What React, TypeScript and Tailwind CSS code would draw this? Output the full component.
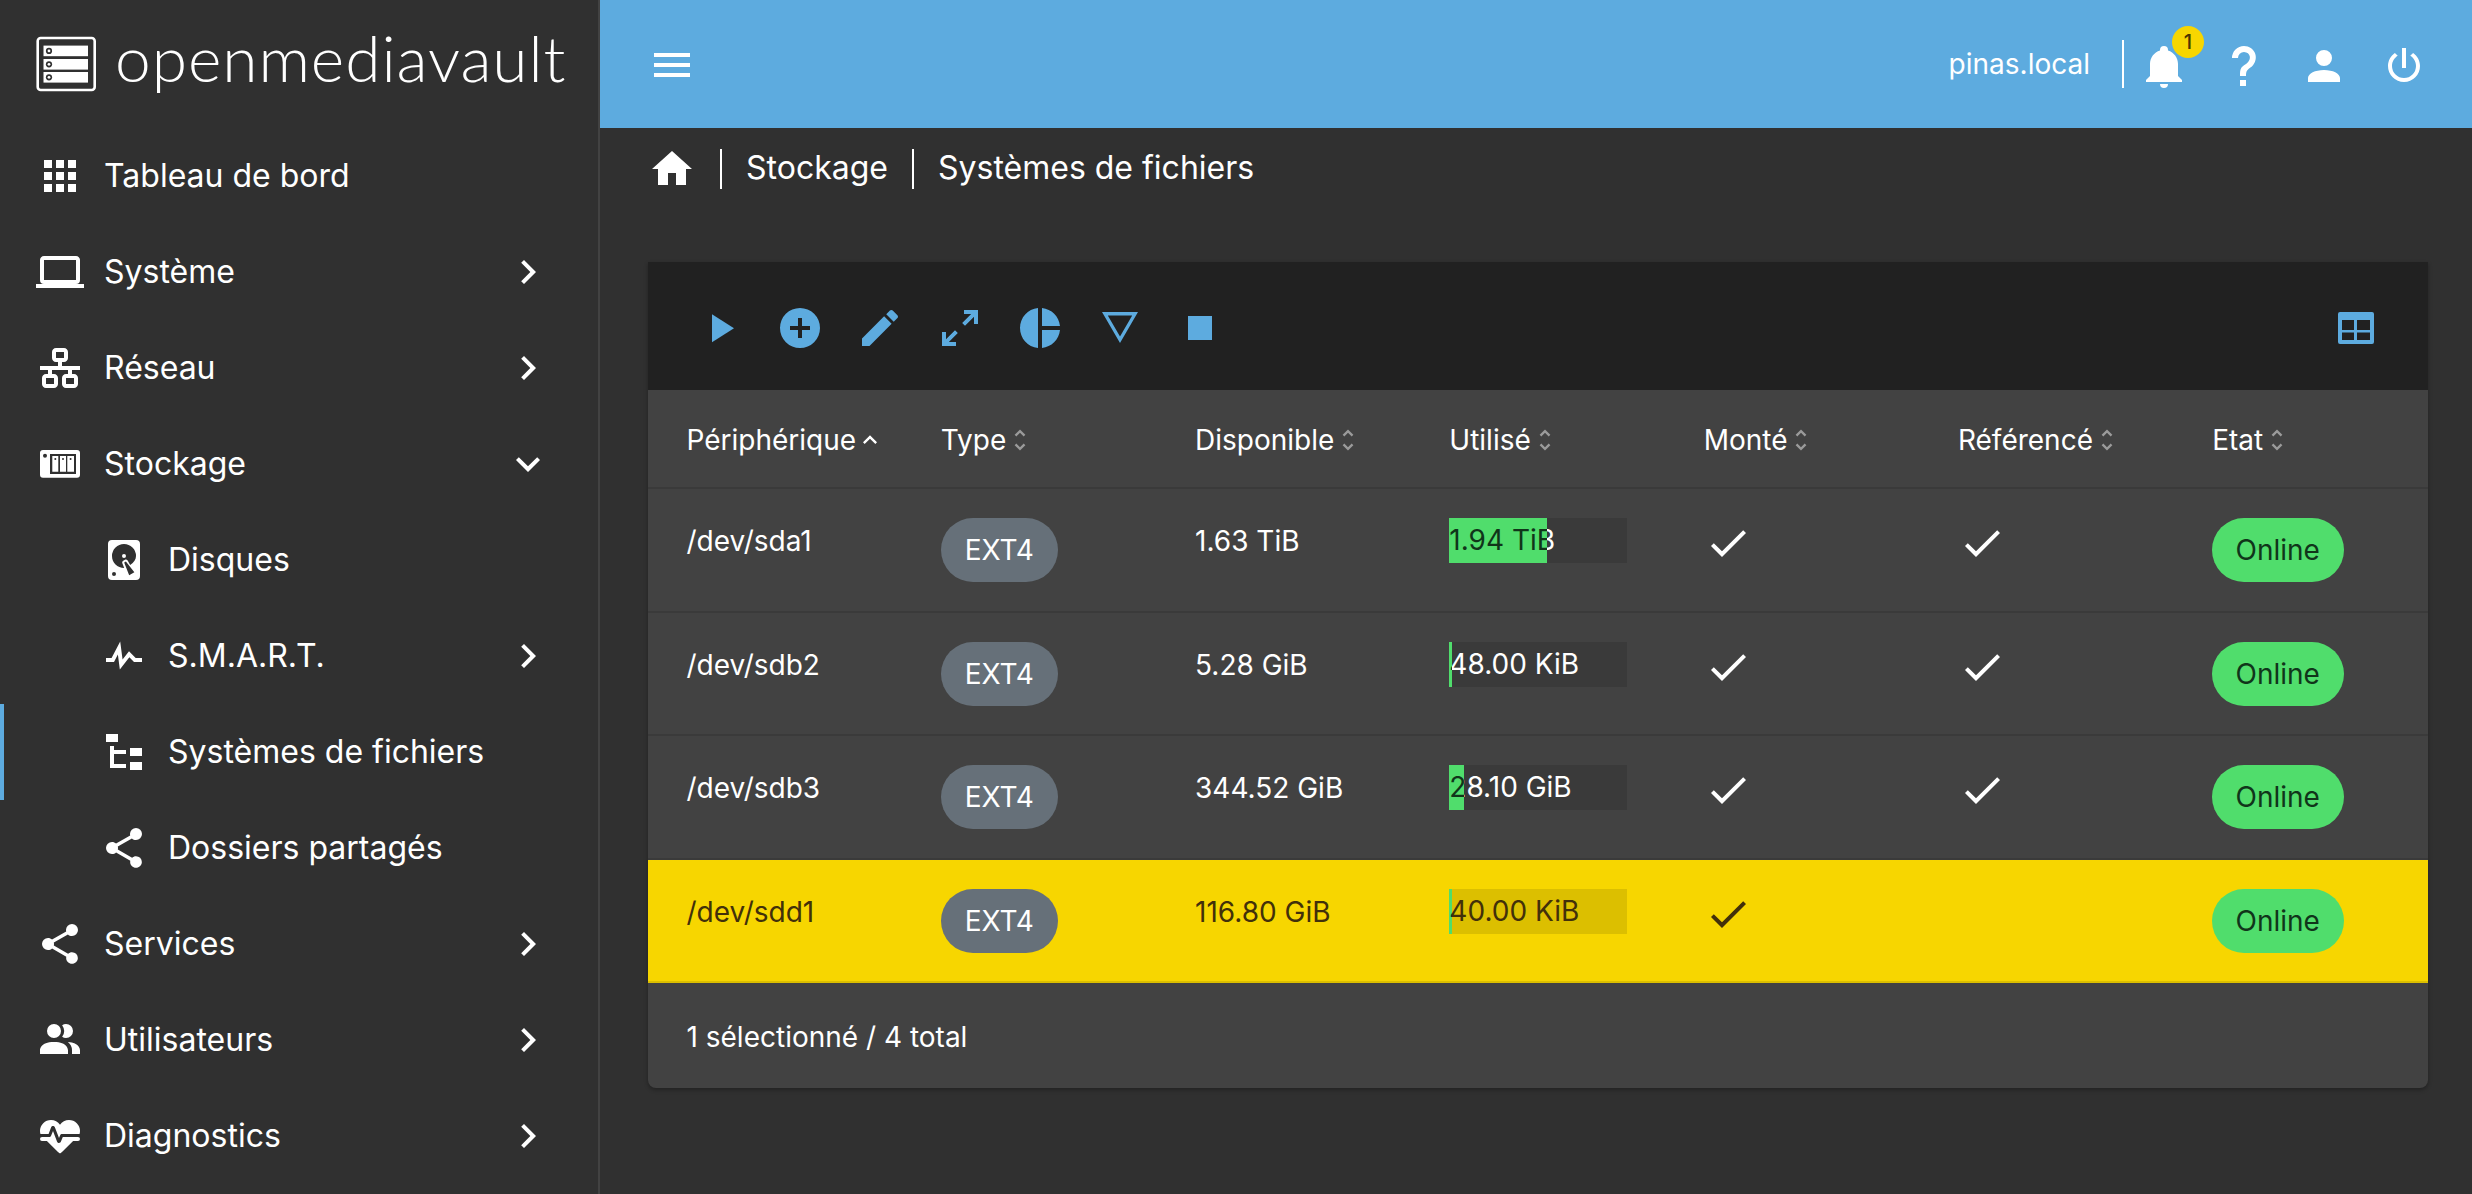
import React from "react";

const P = {
  apps: "M16,20H20V16H16M16,14H20V10H16M10,8H14V4H10M16,8H20V4H16M10,14H14V10H10M4,14H8V10H4M4,20H8V16H4M10,20H14V16H10M4,8H8V4H4V8Z",
  laptop: "M4,6H20V16H4M20,18A2,2 0 0,0 22,16V6C22,4.89 21.1,4 20,4H4C2.89,4 2,4.89 2,6V16A2,2 0 0,0 4,18H0V20H24V18H20Z",
  lan: "M10,2C8.89,2 8,2.89 8,4V7C8,8.11 8.89,9 10,9H11V11H2V13H6V15H5C3.89,15 3,15.89 3,17V20C3,21.11 3.89,22 5,22H9C10.11,22 11,21.11 11,20V17C11,15.89 10.11,15 9,15H8V13H16V15H15C13.89,15 13,15.89 13,17V20C13,21.11 13.89,22 15,22H19C20.11,22 21,21.11 21,20V17C21,15.89 20.11,15 19,15H18V13H22V11H13V9H14C15.11,9 16,8.11 16,7V4C16,2.89 15.11,2 14,2H10M10,4H14V7H10V4M5,17H9V20H5V17M15,17H19V20H15V17Z",
  storage: "M3.5,5H20.5A1.5,1.5 0 0,1 22,6.5V17.4A1.5,1.5 0 0,1 20.5,18.9H3.5A1.5,1.5 0 0,1 2,17.4V6.5A1.5,1.5 0 0,1 3.5,5ZM7,7V17H20V7ZM8.15,8V15.85H11.15V8ZM12,8V15.85H15V8ZM15.65,8V15.85H19V8ZM4.5,6.85A1,1 0 1,0 4.5,8.85A1,1 0 1,0 4.5,6.85ZM9.65,9A.5,.5 0 1,0 9.65,10A.5,.5 0 1,0 9.65,9ZM13.5,9A.5,.5 0 1,0 13.5,10A.5,.5 0 1,0 13.5,9ZM17.3,9A.5,.5 0 1,0 17.3,10A.5,.5 0 1,0 17.3,9Z",
  harddisk: "M6,2H18A2,2 0 0,1 20,4V20A2,2 0 0,1 18,22H6A2,2 0 0,1 4,20V4A2,2 0 0,1 6,2M12,4A6,6 0 0,0 6,10C6,13.31 8.69,16 12.1,16L11.22,13.77C10.95,13.29 11.13,12.68 11.61,12.4L12.47,11.9C12.95,11.63 13.56,11.8 13.84,12.28L15.08,14.47C17,13.27 18,11.67 18,10A6,6 0 0,0 12,4M12,9A1,1 0 0,1 13,10A1,1 0 0,1 12,11A1,1 0 0,1 11,10A1,1 0 0,1 12,9M7,18A1,1 0 0,0 6,19A1,1 0 0,0 7,20A1,1 0 0,0 8,19A1,1 0 0,0 7,18M12.09,13.27L14.58,19.58L17.17,18.08L12.95,12.77L12.09,13.27Z",
  pulse: "M3,13H5.79L10.1,4.79L11.28,13.75L14.5,9.66L17.83,13H21V15H17L14.67,12.67L9.92,18.73L8.94,11.31L7,15H3V13Z",
  tree: "M3,3H9V7H3V3M15,10H21V14H15V10M15,17H21V21H15V17M13,13H7V18H13V20H7L5,20V9H7V11H13V13Z",
  share: "M18,16.08C17.24,16.08 16.56,16.38 16.04,16.85L8.91,12.7C8.96,12.47 9,12.24 9,12C9,11.76 8.96,11.53 8.91,11.3L15.96,7.19C16.5,7.69 17.21,8 18,8A3,3 0 0,0 21,5A3,3 0 0,0 18,2A3,3 0 0,0 15,5C15,5.24 15.04,5.47 15.09,5.7L8.04,9.81C7.5,9.31 6.79,9 6,9A3,3 0 0,0 3,12A3,3 0 0,0 6,15C6.79,15 7.5,14.69 8.04,14.19L15.16,18.34C15.11,18.55 15.08,18.77 15.08,19C15.08,20.61 16.39,21.91 18,21.91C19.61,21.91 20.92,20.61 20.92,19A2.92,2.92 0 0,0 18,16.08Z",
  users: "M16 17V19H2V17S2 13 9 13 16 17 16 17M12.5 7.5A3.5 3.5 0 1 0 9 11A3.5 3.5 0 0 0 12.5 7.5M15.94 13A5.32 5.32 0 0 1 18 17V19H22V17S22 13.37 15.94 13M15 4A3.39 3.39 0 0 0 13.07 4.59A5 5 0 0 1 13.07 10.41A3.39 3.39 0 0 0 15 11A3.5 3.5 0 0 0 15 4Z",
  heart: "M7.5,4A5.5,5.5 0 0,0 2,9.5C2,10 2.09,10.5 2.22,11H6.3L7.57,7.63C7.87,6.83 9.05,6.75 9.43,7.63L11.5,13L12.09,11.58C12.22,11.25 12.57,11 13,11H21.78C21.91,10.5 22,10 22,9.5A5.5,5.5 0 0,0 16.5,4C14.64,4 13,4.93 12,6.34C11,4.93 9.36,4 7.5,4V4M3,12.5A1,1 0 0,0 2,13.5A1,1 0 0,0 3,14.5H5.44L11,20C12,20.9 12,20.9 13,20L18.56,14.5H21A1,1 0 0,0 22,13.5A1,1 0 0,0 21,12.5H13.4L12.47,14.8C12.07,15.81 10.92,15.67 10.55,14.83L8.5,9.5L7.54,11.83C7.39,12.21 7.05,12.5 6.6,12.5H3Z",
  home: "M10,20V14H14V20H19V12H22L12,3L2,12H5V20H10Z",
  menu: "M3,6H21V8H3V6M3,11H21V13H3V11M3,16H21V18H3V16Z",
  bell: "M21,19V20H3V19L5,17V11C5,7.9 7.03,5.17 10,4.29C10,4.19 10,4.1 10,4A2,2 0 0,1 12,2A2,2 0 0,1 14,4C14,4.1 14,4.19 14,4.29C16.97,5.17 19,7.9 19,11V17L21,19M14,21A2,2 0 0,1 12,23A2,2 0 0,1 10,21",
  help: "M10,19H13V22H10V19M12,2C17.35,2.22 19.68,7.62 16.5,11.67C15.67,12.67 14.33,13.33 13.67,14.17C13,15 13,16 13,17H10C10,15.33 10,13.92 10.67,12.92C11.33,11.92 12.67,11.33 13.5,10.67C15.92,8.43 15.32,5.26 12,5A3,3 0 0,0 9,8H6A6,6 0 0,1 12,2Z",
  account: "M12,4A4,4 0 0,1 16,8A4,4 0 0,1 12,12A4,4 0 0,1 8,8A4,4 0 0,1 12,4M12,14C16.42,14 20,15.79 20,18V20H4V18C4,15.79 7.58,14 12,14Z",
  power: "M16.56,5.44L15.11,6.89C16.84,7.94 18,9.83 18,12A6,6 0 0,1 12,18A6,6 0 0,1 6,12C6,9.83 7.16,7.94 8.88,6.88L7.44,5.44C5.36,6.88 4,9.28 4,12A8,8 0 0,0 12,20A8,8 0 0,0 20,12C20,9.28 18.64,6.88 16.56,5.44M13,3H11V13H13",
  play: "M8,5.14V19.14L19,12.14L8,5.14Z",
  plus: "M17,13H13V17H11V13H7V11H11V7H13V11H17M12,2A10,10 0 0,0 2,12A10,10 0 0,0 12,22A10,10 0 0,0 22,12A10,10 0 0,0 12,2Z",
  pencil: "M20.71,7.04C21.1,6.65 21.1,6 20.71,5.63L18.37,3.29C18,2.9 17.35,2.9 16.96,3.29L15.12,5.12L18.87,8.87M3,17.25V21H6.75L17.81,9.93L14.06,6.18L3,17.25Z",
  expand: "M10,21V19H6.41L10.91,14.5L9.5,13.09L5,17.59V14H3V21H10M14.5,10.91L19,6.41V10H21V3H14V5H17.59L13.09,9.5L14.5,10.91Z",
  pie: "M11,2V22C5.9,21.5 2,17.2 2,12C2,6.8 5.9,2.5 11,2M13,2V11H22C21.5,6.2 17.8,2.5 13,2M13,13V22C17.7,21.5 21.5,17.8 22,13H13Z",
  tri: "M3,4H21L12,19.5ZM5.9,5.7L12,16.2L18.1,5.7Z",
  stop: "M18,18H6V6H18V18Z",
  table: "M4,4H20A1,1 0 0,1 21,5V19A1,1 0 0,1 20,20H4A1,1 0 0,1 3,19V5A1,1 0 0,1 4,4ZM5,8V13H11V8ZM12.5,8V13H19V8ZM5,14.3V18H11V14.3ZM12.5,14.3V18H19V14.3Z",
  check: "M21,7L9,19L3.5,13.5L4.91,12.09L9,16.17L19.59,5.59L21,7Z",
  right: "M8.59,16.58L13.17,12L8.59,7.41L10,6L16,12L10,18L8.59,16.58Z",
  down: "M7.41,8.58L12,13.17L16.59,8.58L18,10L12,16L6,10L7.41,8.58Z",
  up: "M7.41,15.41L12,10.83L16.59,15.41L18,14L12,8L6,14L7.41,15.41Z",
  sort: "M12,18.17L8.83,15L7.41,16.41L12,21L16.59,16.41L15.17,15M12,5.83L15.17,9L16.59,7.59L12,3L7.41,7.59L8.83,9L12,5.83Z",
};

function Icon({ d, className }: { d: string; className?: string }) {
  return (
    <svg viewBox="0 0 24 24" className={className} fill="currentColor" fillRule="evenodd">
      <path d={d} />
    </svg>
  );
}

function NavRow({ icon, label, chevron, sub, active }: { icon: string; label: string; chevron?: string; sub?: boolean; active?: boolean }) {
  return (
    <div className={`relative flex h-24 items-center ${sub ? "pl-[100px]" : "pl-9"} pr-[46px]`}>
      {active && <div className="absolute left-0 top-0 h-full w-1 bg-[#5dabdf]" />}
      <Icon d={icon} className="h-12 w-12 shrink-0" />
      <span className="ml-5 flex-1 whitespace-nowrap">{label}</span>
      {chevron && <Icon d={chevron} className="h-12 w-12 shrink-0" />}
    </div>
  );
}

function Logo() {
  return (
    <div className="flex h-32 items-center pl-9">
      <svg viewBox="0 0 60 56" className="h-[56px] w-[60px] shrink-0" fill="none">
        <rect x="1.7" y="2" width="57" height="52" rx="3" stroke="#fff" strokeWidth="2.6" />
        {[9.6, 23, 36].map((y) => (
          <g key={y}>
            <rect x="7.5" y={y} width="44.5" height="10.6" fill="#fff" />
            <circle cx="13" cy={y + 5.3} r="3.1" fill="#303030" />
            <circle cx="13" cy={y + 5.3} r="1.4" fill="#fff" />
          </g>
        ))}
      </svg>
      <span className="ml-[19px] pb-[12px] whitespace-nowrap font-['Lato'] text-[64px] font-light leading-none tracking-[0.95px]">openmediavault</span>
    </div>
  );
}

const headers = ["Périphérique", "Type", "Disponible", "Utilisé", "Monté", "Référencé", "Etat"];

const rows = [
  { dev: "/dev/sda1", free: "1.63 TiB", used: "1.94 TiB", pct: 55, ref: true },
  { dev: "/dev/sdb2", free: "5.28 GiB", used: "48.00 KiB", pct: 1.5, ref: true },
  { dev: "/dev/sdb3", free: "344.52 GiB", used: "28.10 GiB", pct: 8, ref: true },
  { dev: "/dev/sdd1", free: "116.80 GiB", used: "40.00 KiB", pct: 1.5, ref: false, selected: true },
];

export default function App() {
  return (
    <div className="flex h-[1194px] w-[2472px] overflow-hidden bg-[#303030] font-['Inter'] text-[32px] text-white">
      <aside className="h-full w-[600px] shrink-0 border-r-2 border-[#424242] bg-[#303030]">
        <Logo />
        <NavRow icon={P.apps} label="Tableau de bord" />
        <NavRow icon={P.laptop} label="Système" chevron={P.right} />
        <NavRow icon={P.lan} label="Réseau" chevron={P.right} />
        <NavRow icon={P.storage} label="Stockage" chevron={P.down} />
        <NavRow icon={P.harddisk} label="Disques" sub />
        <NavRow icon={P.pulse} label="S.M.A.R.T." chevron={P.right} sub />
        <NavRow icon={P.tree} label="Systèmes de fichiers" sub active />
        <NavRow icon={P.share} label="Dossiers partagés" sub />
        <NavRow icon={P.share} label="Services" chevron={P.right} />
        <NavRow icon={P.users} label="Utilisateurs" chevron={P.right} />
        <NavRow icon={P.heart} label="Diagnostics" chevron={P.right} />
      </aside>

      <main className="flex min-w-0 flex-1 flex-col">
        <header className="flex h-32 shrink-0 items-center bg-[#5dabdf] pl-12 pr-[28px]">
          <Icon d={P.menu} className="mt-[2px] h-12 w-12" />
          <span className="ml-auto whitespace-nowrap text-[28px]">pinas.local</span>
          <div className="ml-8 h-12 w-0.5 bg-white" />
          <div className="relative mt-[3px] flex h-20 w-20 items-center justify-center">
            <Icon d={P.bell} className="h-12 w-12" />
            <span className="absolute left-[48px] top-[0.5px] flex h-8 w-8 items-center justify-center rounded-full bg-[#f7d600] text-[20px] font-medium leading-none text-[#4a3500]">1</span>
          </div>
          <div className="mt-[3px] flex h-20 w-20 items-center justify-center"><Icon d={P.help} className="h-12 w-12" /></div>
          <div className="mt-[3px] flex h-20 w-20 items-center justify-center"><Icon d={P.account} className="h-12 w-12" /></div>
          <div className="mt-[3px] flex h-20 w-20 items-center justify-center"><Icon d={P.power} className="h-12 w-12" /></div>
        </header>

        <nav className="flex h-[82px] shrink-0 items-center pl-12">
          <Icon d={P.home} className="h-12 w-12" />
          <div className="ml-6 h-10 w-0.5 bg-white" />
          <span className="ml-6 pb-[2px]">Stockage</span>
          <div className="ml-6 h-10 w-0.5 bg-white" />
          <span className="ml-6 pb-[2px]">Systèmes de fichiers</span>
        </nav>

        <section className="ml-12 mr-[44px] mt-[52px] overflow-hidden rounded-b-lg bg-[#424242] shadow-[0_2px_4px_rgba(0,0,0,0.3)]">
          <div className="flex h-[128px] items-center bg-[#212121] px-8 pt-1 text-[#5dabdf]">
            {[P.play, P.plus, P.pencil, P.expand, P.pie, P.tri, P.stop].map((d, i) => (
              <div key={i} className="flex h-20 w-20 items-center justify-center"><Icon d={d} className="h-12 w-12" /></div>
            ))}
            <div className="ml-auto flex h-20 w-20 items-center justify-center"><Icon d={P.table} className="h-12 w-12" /></div>
          </div>

          <div className="grid h-[99px] grid-cols-7 items-center border-b-2 border-[#3a3a3a] pt-[3px] text-[28px]">
            {headers.map((h, i) => (
              <div key={h} className="flex items-center pl-[38.5px]">
                <span className="whitespace-nowrap">{h}</span>
                <Icon d={i === 0 ? P.up : P.sort} className={`h-7 w-7 ${i === 0 ? "text-white" : "text-[#9a9a9a]"}`} />
              </div>
            ))}
          </div>

          {rows.map((r) => (
            <div
              key={r.dev}
              className={`grid h-[123.5px] grid-cols-7 border-b-2 pt-[29px] text-[28px] ${r.selected ? "border-[#dcbf00] bg-[#f7d600] text-[#42300a]" : "border-[#3a3a3a]"}`}
            >
              <div className="pl-[38.5px] leading-[46px]">{r.dev}</div>
              <div className="pl-[38.5px]">
                <span className="flex h-16 w-[117px] items-center justify-center rounded-[32px] bg-[#667079] text-white">EXT4</span>
              </div>
              <div className="pl-[38.5px] leading-[46px]">{r.free}</div>
              <div className="pl-[38.5px]">
                <div className={`relative h-[45px] w-[178px] ${r.selected ? "bg-[#dcbf00]" : "bg-[#3a3a3a]"}`}>
                  <span className="absolute left-0 top-0 whitespace-nowrap leading-[45px]">{r.used}</span>
                  <div className="absolute left-0 top-0 h-full overflow-hidden bg-[#50dd6c] text-[#10351a]" style={{ width: `${r.pct}%` }}>
                    <span className="block w-[178px] whitespace-nowrap leading-[45px]">{r.used}</span>
                  </div>
                </div>
              </div>
              <div className="pl-[39px]"><Icon d={P.check} className="mt-px h-12 w-12" /></div>
              <div className="pl-[39px]">{r.ref && <Icon d={P.check} className="mt-px h-12 w-12" />}</div>
              <div className="pl-[38px]">
                <span className="flex h-16 w-[132px] items-center justify-center rounded-[32px] bg-[#50dd6c] text-[#10351a]">Online</span>
              </div>
            </div>
          ))}

          <div className="flex h-[105px] items-center pl-[38.5px] pt-[2px] text-[28px]">1 sélectionné / 4 total</div>
        </section>
      </main>
    </div>
  );
}
